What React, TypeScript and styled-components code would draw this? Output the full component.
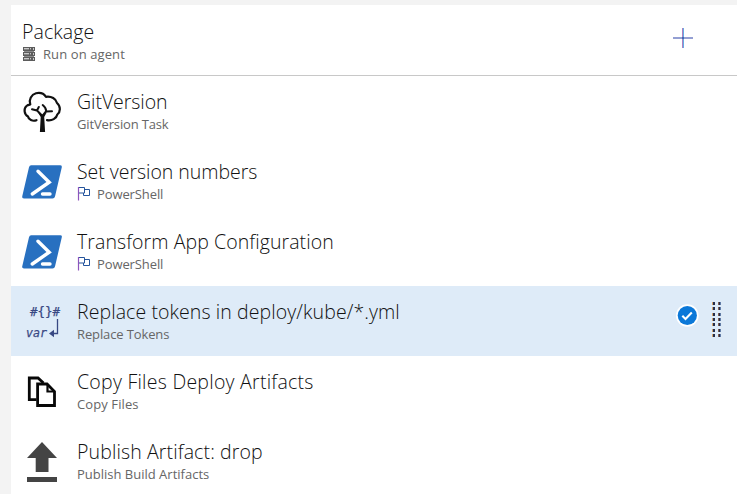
import React from "react";
import styled, { createGlobalStyle } from "styled-components";

const GlobalStyle = createGlobalStyle`
  * { box-sizing: border-box; }
  body {
    margin: 0;
    background: #f3f3f3;
    font-family: "Open Sans", "Noto Sans", sans-serif;
    overflow: hidden;
  }
  svg { display: block; overflow: visible; }
`;

const Page = styled.div`
  height: 494px;
  padding: 5px 0 0 11px;
  overflow: hidden;
`;

const Panel = styled.main`
  height: 489px;
  background: #fff;
  overflow: hidden;
`;

const Header = styled.header`
  display: flex;
  height: 71px;
  padding: 16px 44px 0 11px;
  border-bottom: 1px solid #c8c8c8;
`;

const Row = styled.div<{ $selected?: boolean }>`
  display: flex;
  height: 70px;
  padding: 15px 16px 0 11px;
  background: ${(p) => (p.$selected ? "#deebf8" : "#fff")};
`;

const IconSlot = styled.div`
  width: 40px;
  height: 40px;
  margin-right: 15px;
  flex: none;
`;

const Texts = styled.div`
  flex: 1;
  min-width: 0;
`;

const Title = styled.div<{ $tracking?: number }>`
  height: 23px;
  line-height: 21px;
  font-size: 19.5px;
  font-weight: 300;
  color: #111;
  white-space: nowrap;
  letter-spacing: ${(p) => p.$tracking ?? 0}px;
`;

const Subtitle = styled.div<{ $tracking?: number }>`
  display: flex;
  height: 20px;
  line-height: 20px;
  font-size: 13px;
  color: #666;
  white-space: nowrap;
  letter-spacing: ${(p) => p.$tracking ?? 0}px;
`;

const SmallIcon = styled.span<{ $gap: number }>`
  width: 13px;
  height: 20px;
  padding-top: 3px;
  margin-left: 1px;
  margin-right: ${(p) => p.$gap}px;
  flex: none;
`;

const AddButton = styled.button`
  width: 20px;
  height: 20px;
  margin-top: 7px;
  padding: 0;
  border: 0;
  background: none;
`;

const RowActions = styled.div`
  display: flex;
  gap: 13px;
`;

const CheckSlot = styled.div`
  padding-top: 2px;
`;

const ServerIcon = () => (
  <svg width="12" height="14" viewBox="0 0 12 14" shapeRendering="crispEdges">
    {[0, 5, 10].map((y) => (
      <g key={y}>
        <path fill="#5c5c5c" d={`M0 ${y}h12v4H0z`} />
        <path fill="#c8c8c8" d={`M1 ${y + 1}h5v1H1zM7 ${y + 1}h1v1H7zM10 ${y + 1}h1v2h-1z`} />
        <path fill="#858585" d={`M1 ${y + 2}h5v1H1zM7 ${y + 2}h1v1H7z`} />
      </g>
    ))}
    <path fill="#8a8a8a" d="M1 4h10v1H1zM1 9h10v1H1z" />
  </svg>
);

const FlagIcon = () => (
  <svg width="13" height="14" viewBox="0 0 13 14" fill="none" strokeWidth="1">
    <path stroke="#24549c" d="M0 .5h6.500v5.500H0M6.500 2.500h5v6h-6v-2.500" />
    <path stroke="#8d55bd" strokeWidth="1.200" d="M.5 0v13.500" />
  </svg>
);

const TreeIcon = () => (
  <svg width="40" height="40" viewBox="0 0 40 40" fill="none" stroke="#111" strokeLinecap="round" strokeLinejoin="round">
    <path strokeWidth="2.200" d="M14.500 29.200C10.500 30.800 6.500 28.500 6 25.500C2 23.500 1.500 17.500 4.500 15C6 13.700 7.500 13.700 8.300 13.500C6.500 8.500 9.500 3.500 14 2.300C18.500 1.300 22 2.800 24 5.800C29.500 5 34 7.800 35 12C39 15.500 38.500 21 35.300 23.500C34.500 27.500 30 30 25 29.200" />
    <path strokeWidth="2" d="M10 18.200l5 1.300L19.500 24M16.800 16l-1.800 3.500M20.700 14c2 1.500 3.300 3.500 3.500 6L21 24M30 20.200l-6 .300" />
    <path fill="#111" stroke="none" d="M16 21.500l4.500 2.500 4.500-3-2.800 5 .900 15h-5.200l.800-15z" />
  </svg>
);

const PowerShellIcon = () => (
  <svg width="40" height="40" viewBox="0 0 40 40">
    <path fill="#2870c0" d="M9.200 4.300H38.300Q40.300 4.300 39.800 6.300L33 35.500Q32.500 37.500 30.500 37.500H2Q-.200 37.500 .200 35.500L7 6.300Q7.500 4.300 9.200 4.300z" />
    <path d="M16 10.300L27.200 21.200 10.300 33M20.500 33h7.500" fill="none" stroke="#fff" strokeWidth="3.400" strokeLinecap="round" />
  </svg>
);

const TokensIcon = () => (
  <svg width="40" height="40" viewBox="0 0 40 40" fill="#384883">
    <g fontFamily="DejaVu Sans Mono, monospace" stroke="#384883" strokeWidth=".25">
      <text x="8" y="14.500" fontSize="12" textLength="30" lengthAdjust="spacingAndGlyphs">{"#{}#"}</text>
      <text x="4" y="36" fontSize="12.500" fontStyle="italic" textLength="21" lengthAdjust="spacingAndGlyphs">var</text>
    </g>
    <path d="M35.500 18v14.500h-5" fill="none" stroke="#384883" strokeWidth="1.300" />
    <path d="M27 32.500l5-3.700v7.400z" />
  </svg>
);

const CopyIcon = () => (
  <svg width="40" height="40" viewBox="0 0 40 40" fill="none" stroke="#080808" strokeWidth="2.800">
    <path d="M14.500 28.700H7.300V7H16L21.500 12" />
    <path fill="#fff" d="M15.600 13H25L32.500 20.500V34.500H15.600z" />
    <path strokeWidth="2.200" d="M25.500 13V20.500H32.500" />
  </svg>
);

const PublishIcon = () => (
  <svg width="40" height="40" viewBox="0 0 40 40" fill="#444">
    <path d="M20 1L35 17H26.500V31H13.700V17H5zM5 36h30v5H5z" />
  </svg>
);

const PlusIcon = () => (
  <svg width="20" height="20" shapeRendering="crispEdges">
    <path fill="#949fd3" d="M0 9h20v2H0z" />
    <path fill="#ae80c0" d="M9 0h1v20H9z" />
    <path fill="#65ace5" d="M10 0h1v20h-1z" />
    <path fill="#4268b3" d="M9 9h2v2H9z" />
  </svg>
);

const CheckIcon = () => (
  <svg width="24" height="24" viewBox="0 0 24 24">
    <circle cx="12.300" cy="12.500" r="11.300" fill="#fff" />
    <circle cx="12.300" cy="12.500" r="9.600" fill="#0b78d8" />
    <path d="M7.300 12.800l3.200 3.200 6.300-6.500" fill="none" stroke="#fff" strokeWidth="2.100" />
  </svg>
);

const GripIcon = () => (
  <svg width="9" height="36" viewBox="0 0 9 36" shapeRendering="crispEdges">
    {[1, 6, 12, 17, 22, 28, 33].map((y) => (
      <g key={y}>
        <path fill="#d1a56c" d={`M0 ${y}h1v3H0z`} />
        <path fill="#252e4c" d={`M1 ${y}h2v3H1z`} />
        <path fill="#80604f" d={`M6 ${y}h1v3H6z`} />
        <path fill="#272d4d" d={`M7 ${y}h1v3H7z`} />
        <path fill="#627ca6" d={`M8 ${y}h1v3H8z`} />
      </g>
    ))}
  </svg>
);

interface Task {
  title: string;
  subtitle: string;
  icon: React.ReactNode;
  flag?: boolean;
  selected?: boolean;
  titleTracking?: number;
  subTracking?: number;
}

const tasks: Task[] = [
  { title: "GitVersion", subtitle: "GitVersion Task", icon: <TreeIcon />, titleTracking: -0.05, subTracking: -0.15 },
  { title: "Set version numbers", subtitle: "PowerShell", icon: <PowerShellIcon />, flag: true, titleTracking: -0.03, subTracking: -0.1 },
  { title: "Transform App Configuration", subtitle: "PowerShell", icon: <PowerShellIcon />, flag: true, titleTracking: 0.08, subTracking: -0.1 },
  { title: "Replace tokens in deploy/kube/*.yml", subtitle: "Replace Tokens", icon: <TokensIcon />, selected: true, titleTracking: 0.09, subTracking: -0.12 },
  { title: "Copy Files Deploy Artifacts", subtitle: "Copy Files", icon: <CopyIcon />, titleTracking: 0.25, subTracking: 0.1 },
  { title: "Publish Artifact: drop", subtitle: "Publish Build Artifacts", icon: <PublishIcon />, titleTracking: 0.12 },
];

export default function App() {
  return (
    <>
      <GlobalStyle />
      <Page>
        <Panel>
          <Header>
            <Texts>
              <Title $tracking={0.08}>Package</Title>
              <Subtitle $tracking={0.1}>
                <SmallIcon $gap={7}><ServerIcon /></SmallIcon>
                Run on agent
              </Subtitle>
            </Texts>
            <AddButton aria-label="Add task"><PlusIcon /></AddButton>
          </Header>
          {tasks.map((t) => (
            <Row key={t.title} $selected={t.selected}>
              <IconSlot>{t.icon}</IconSlot>
              <Texts>
                <Title $tracking={t.titleTracking}>{t.title}</Title>
                <Subtitle $tracking={t.subTracking}>
                  {t.flag && <SmallIcon $gap={6}><FlagIcon /></SmallIcon>}
                  {t.subtitle}
                </Subtitle>
              </Texts>
              {t.selected && (
                <RowActions>
                  <CheckSlot><CheckIcon /></CheckSlot>
                  <GripIcon />
                </RowActions>
              )}
            </Row>
          ))}
        </Panel>
      </Page>
    </>
  );
}
